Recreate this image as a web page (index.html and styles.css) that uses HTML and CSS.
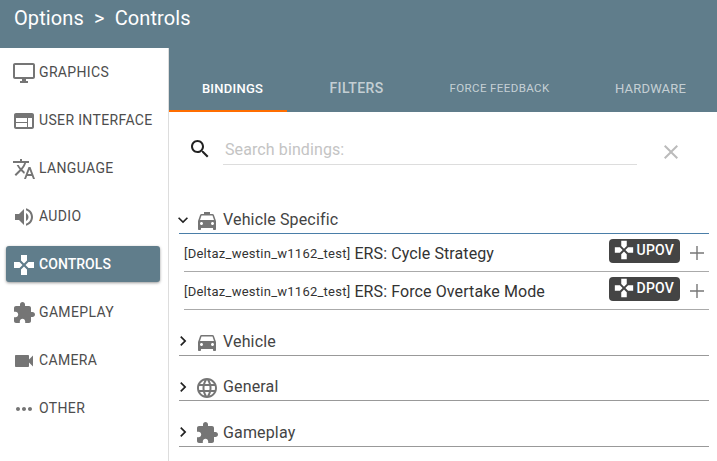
FILE: index.html
```html
<!DOCTYPE html>
<html>
<head>
	<title>Options - Controls</title>
	<meta charset="UTF-8">
	<link rel="stylesheet" href="styles.css">
</head>
<body>
	<svg class="icon-defs">
		<symbol id="i-desktop" viewBox="0 0 24 24"><path d="M21 2H3c-1.1 0-2 .9-2 2v12c0 1.1.9 2 2 2h7v2H8v2h8v-2h-2v-2h7c1.1 0 2-.9 2-2V4c0-1.1-.9-2-2-2zm0 14H3V4h18v12z"/></symbol>
		<symbol id="i-web" viewBox="0 0 24 24"><path d="M20 4H4c-1.1 0-1.99.9-1.99 2L2 18c0 1.1.9 2 2 2h16c1.1 0 2-.9 2-2V6c0-1.1-.9-2-2-2zm-5 14H4v-4h11v4zm0-5H4V9h11v4zm5 5h-4V9h4v9z"/></symbol>
		<symbol id="i-translate" viewBox="0 0 24 24"><path d="M12.87 15.07l-2.54-2.51.03-.03c1.74-1.94 2.98-4.17 3.71-6.53H17V4h-7V2H8v2H1v1.99h11.17C11.5 7.92 10.44 9.75 9 11.35 8.07 10.32 7.3 9.19 6.69 8h-2c.73 1.63 1.73 3.17 2.98 4.56l-5.09 5.02L4 19l5-5 3.11 3.11.76-2.04zM18.5 10h-2L12 22h2l1.12-3h4.75L21 22h2l-4.5-12zm-2.62 7l1.62-4.33L19.12 17h-3.24z"/></symbol>
		<symbol id="i-volume" viewBox="0 0 24 24"><path d="M3 9v6h4l5 5V4L7 9H3zm13.5 3c0-1.77-1.02-3.29-2.5-4.03v8.05c1.48-.73 2.5-2.25 2.5-4.02zM14 3.23v2.06c2.89.86 5 3.54 5 6.71s-2.11 5.85-5 6.71v2.06c4.01-.91 7-4.49 7-8.77s-2.99-7.86-7-8.77z"/></symbol>
		<symbol id="i-gamepad" viewBox="0 0 24 24"><path d="M15 7.5V2H9v5.5l3 3 3-3zM7.5 9H2v6h5.5l3-3-3-3zM9 16.5V22h6v-5.5l-3-3-3 3zM16.5 9l-3 3 3 3H22V9h-5.5z"/></symbol>
		<symbol id="i-extension" viewBox="0 0 24 24"><path d="M20.5 11H19V7c0-1.1-.9-2-2-2h-4V3.5C13 2.12 11.88 1 10.5 1S8 2.12 8 3.5V5H4c-1.1 0-1.99.9-1.99 2v3.8H3.5c1.49 0 2.7 1.21 2.7 2.7s-1.21 2.7-2.7 2.7H2V20c0 1.1.9 2 2 2h3.8v-1.5c0-1.49 1.21-2.7 2.7-2.7 1.49 0 2.7 1.21 2.7 2.7V22H17c1.1 0 2-.9 2-2v-4h1.5c1.38 0 2.5-1.12 2.5-2.5S21.88 11 20.5 11z"/></symbol>
		<symbol id="i-videocam" viewBox="0 0 24 24"><path d="M17 10.5V7c0-.55-.45-1-1-1H4c-.55 0-1 .45-1 1v10c0 .55.45 1 1 1h12c.55 0 1-.45 1-1v-3.5l4 4v-11l-4 4z"/></symbol>
		<symbol id="i-more" viewBox="0 0 24 24"><path d="M6 10c-1.1 0-2 .9-2 2s.9 2 2 2 2-.9 2-2-.9-2-2-2zm12 0c-1.1 0-2 .9-2 2s.9 2 2 2 2-.9 2-2-.9-2-2-2zm-6 0c-1.1 0-2 .9-2 2s.9 2 2 2 2-.9 2-2-.9-2-2-2z"/></symbol>
		<symbol id="i-search" viewBox="0 0 24 24"><path d="M15.5 14h-.79l-.28-.27C15.41 12.59 16 11.11 16 9.5 16 5.91 13.09 3 9.5 3S3 5.91 3 9.5 5.91 16 9.5 16c1.61 0 3.09-.59 4.23-1.57l.27.28v.79l5 4.99L20.49 19l-4.99-5zm-6 0C7.01 14 5 11.99 5 9.5S7.01 5 9.5 5 14 7.01 14 9.5 11.99 14 9.5 14z"/></symbol>
		<symbol id="i-close" viewBox="0 0 24 24"><path d="M19 6.41L17.59 5 12 10.59 6.41 5 5 6.41 10.59 12 5 17.59 6.41 19 12 13.41 17.59 19 19 17.59 13.41 12z"/></symbol>
		<symbol id="i-add" viewBox="0 0 24 24"><path d="M19 12.7h-6.3V19h-1.4v-6.3H5v-1.4h6.3V5h1.4v6.3H19z"/></symbol>
		<symbol id="i-down" viewBox="0 0 24 24"><path d="M16.59 8.59L12 13.17 7.41 8.59 6 10l6 6 6-6z"/></symbol>
		<symbol id="i-right" viewBox="0 0 24 24"><path d="M10 6L8.59 7.41 13.17 12l-4.58 4.59L10 18l6-6z"/></symbol>
		<symbol id="i-taxi" viewBox="0 0 24 24"><path d="M18.92 6.01C18.72 5.42 18.16 5 17.5 5H15V3H9v2H6.5c-.66 0-1.21.42-1.42 1.01L3 12v8c0 .55.45 1 1 1h1c.55 0 1-.45 1-1v-1h12v1c0 .55.45 1 1 1h1c.55 0 1-.45 1-1v-8l-2.08-5.99zM6.5 16c-.83 0-1.5-.67-1.5-1.5S5.67 13 6.5 13s1.5.67 1.5 1.5S7.33 16 6.5 16zm11 0c-.83 0-1.5-.67-1.5-1.5s.67-1.5 1.5-1.5 1.5.67 1.5 1.5-.67 1.5-1.5 1.5zM5 11l1.5-4.5h11L19 11H5z"/></symbol>
		<symbol id="i-car" viewBox="0 0 24 24"><path d="M18.92 6.01C18.72 5.42 18.16 5 17.5 5h-11c-.66 0-1.21.42-1.42 1.01L3 12v8c0 .55.45 1 1 1h1c.55 0 1-.45 1-1v-1h12v1c0 .55.45 1 1 1h1c.55 0 1-.45 1-1v-8l-2.08-5.99zM6.5 16c-.83 0-1.5-.67-1.5-1.5S5.67 13 6.5 13s1.5.67 1.5 1.5S7.33 16 6.5 16zm11 0c-.83 0-1.5-.67-1.5-1.5s.67-1.5 1.5-1.5 1.5.67 1.5 1.5-.67 1.5-1.5 1.5zM5 11l1.5-4.5h11L19 11H5z"/></symbol>
		<symbol id="i-globe" viewBox="0 0 24 24"><path d="M11.99 2C6.47 2 2 6.48 2 12s4.47 10 9.99 10C17.52 22 22 17.52 22 12S17.52 2 11.99 2zm6.93 6h-2.95c-.32-1.25-.78-2.45-1.38-3.56 1.84.63 3.37 1.91 4.33 3.56zM12 4.04c.83 1.2 1.48 2.53 1.91 3.96h-3.82c.43-1.43 1.08-2.76 1.91-3.96zM4.26 14C4.1 13.36 4 12.69 4 12s.1-1.36.26-2h3.38c-.08.66-.14 1.32-.14 2 0 .68.06 1.34.14 2H4.26zm.82 2h2.95c.32 1.25.78 2.45 1.38 3.56-1.84-.63-3.37-1.9-4.33-3.56zm2.95-8H5.08c.96-1.66 2.49-2.93 4.33-3.56C8.81 5.55 8.35 6.75 8.03 8zM12 19.96c-.83-1.2-1.48-2.53-1.91-3.96h3.82c-.43 1.43-1.08 2.76-1.91 3.96zM14.34 14H9.66c-.09-.66-.16-1.32-.16-2 0-.68.07-1.35.16-2h4.68c.09.65.16 1.32.16 2 0 .68-.07 1.34-.16 2zm.25 5.56c.6-1.11 1.06-2.31 1.38-3.56h2.95c-.96 1.65-2.49 2.93-4.33 3.56zM16.36 14c.08-.66.14-1.32.14-2 0-.68-.06-1.34-.14-2h3.38c.16.64.26 1.31.26 2s-.1 1.36-.26 2h-3.38z"/></symbol>
	</svg>

	<header class="title-bar">Options&nbsp; &gt;&nbsp; Controls</header>

	<div class="main">
		<nav class="sidebar">
			<a class="nav-item"><svg class="nav-icon"><use href="#i-desktop"/></svg>GRAPHICS</a>
			<a class="nav-item"><svg class="nav-icon"><use href="#i-web"/></svg>USER INTERFACE</a>
			<a class="nav-item"><svg class="nav-icon"><use href="#i-translate"/></svg>LANGUAGE</a>
			<a class="nav-item"><svg class="nav-icon"><use href="#i-volume"/></svg>AUDIO</a>
			<a class="nav-item active"><svg class="nav-icon"><use href="#i-gamepad"/></svg>CONTROLS</a>
			<a class="nav-item"><svg class="nav-icon"><use href="#i-extension"/></svg>GAMEPLAY</a>
			<a class="nav-item"><svg class="nav-icon"><use href="#i-videocam"/></svg>CAMERA</a>
			<a class="nav-item"><svg class="nav-icon"><use href="#i-more"/></svg>OTHER</a>
		</nav>

		<section class="content">
			<div class="tabs">
				<a class="tab selected">BINDINGS</a>
				<a class="tab filters">FILTERS</a>
				<a class="tab force">FORCE FEEDBACK</a>
				<a class="tab hardware">HARDWARE</a>
			</div>

			<div class="search">
				<svg class="search-icon"><use href="#i-search"/></svg>
				<div class="search-field">Search bindings:</div>
				<svg class="search-clear"><use href="#i-close"/></svg>
			</div>

			<div class="group open">
				<svg class="chevron"><use href="#i-down"/></svg>
				<svg class="group-icon"><use href="#i-taxi"/></svg>
				Vehicle Specific
			</div>
			<div class="binding">
				<span class="mod">[Deltaz_westin_w1162_test]</span>
				<span class="binding-name">ERS: Cycle Strategy</span>
				<span class="key"><svg class="key-icon"><use href="#i-gamepad"/></svg>UPOV</span>
				<svg class="add"><use href="#i-add"/></svg>
			</div>
			<div class="binding">
				<span class="mod">[Deltaz_westin_w1162_test]</span>
				<span class="binding-name">ERS: Force Overtake Mode</span>
				<span class="key"><svg class="key-icon"><use href="#i-gamepad"/></svg>DPOV</span>
				<svg class="add"><use href="#i-add"/></svg>
			</div>

			<div class="group first-closed">
				<svg class="chevron"><use href="#i-right"/></svg>
				<svg class="group-icon"><use href="#i-car"/></svg>
				Vehicle
			</div>
			<div class="group">
				<svg class="chevron"><use href="#i-right"/></svg>
				<svg class="group-icon"><use href="#i-globe"/></svg>
				General
			</div>
			<div class="group">
				<svg class="chevron"><use href="#i-right"/></svg>
				<svg class="group-icon"><use href="#i-extension"/></svg>
				Gameplay
			</div>
		</section>
	</div>
</body>
</html>
```

FILE: styles.css
```css
* {
	box-sizing: border-box;
}

html, body {
	height: 100%;
}

body {
	margin: 0;
	overflow: hidden;
	display: flex;
	flex-direction: column;
	background-color: #fff;
	font-family: Roboto, sans-serif;
	color: #333;
}

.icon-defs {
	display: none;
}

svg {
	fill: currentColor;
	flex-shrink: 0;
}

.title-bar {
	height: 48px;
	padding: 5px 0 0 14px;
	background-color: #607d8b;
	color: #fff;
	font-size: 20px;
	line-height: 26px;
	letter-spacing: 0.1px;
}

.main {
	flex: 1;
	display: flex;
	min-height: 0;
}

.sidebar {
	width: 169px;
	padding: 6px 8px 0 6px;
	border-right: 1px solid #ddd;
	display: flex;
	flex-direction: column;
	gap: 12px;
}

.nav-item {
	height: 36px;
	padding-left: 6px;
	display: flex;
	align-items: center;
	gap: 3px;
	font-size: 14px;
	letter-spacing: 0.35px;
	color: #4d4d4d;
	border-radius: 3px;
}

.nav-icon {
	width: 24px;
	height: 24px;
	margin-top: 1px;
	color: #757575;
}

.nav-item.active {
	background-color: #607d8b;
	color: #fff;
	font-weight: 500;
	letter-spacing: 0.05px;
	box-shadow: 0 1px 3px rgba(0, 0, 0, 0.4);
}

.nav-item.active .nav-icon {
	color: #fff;
}

.content {
	flex: 1;
	min-width: 0;
}

.tabs {
	height: 64px;
	background-color: #607d8b;
	display: flex;
	font-size: 13px;
	letter-spacing: 0.4px;
	color: rgba(255, 255, 255, 0.65);
}

.tab {
	flex-shrink: 0;
	height: 64px;
	padding-top: 16px;
	display: flex;
	align-items: center;
	justify-content: center;
	white-space: nowrap;
}

.tab.selected {
	width: 118px;
	padding-left: 9px;
	padding-top: 18px;
	color: #fff;
	font-weight: 500;
	letter-spacing: 0.25px;
	border-bottom: 2px solid #ff6d00;
}

.tab.filters {
	width: 139px;
	font-size: 14px;
	font-weight: 500;
}

.tab.force {
	width: 147px;
	font-size: 11.5px;
}

.tab.hardware {
	width: 155px;
	letter-spacing: 0.2px;
}

.search {
	height: 88px;
	display: flex;
	align-items: flex-start;
	padding: 21px 0 0 19px;
}

.search-icon {
	width: 24px;
	height: 24px;
	margin: 4px 11px 0 0;
	color: #222;
}

.search-field {
	width: 414px;
	height: 32px;
	padding-left: 2px;
	border-bottom: 1px solid #ddd;
	font-size: 16px;
	line-height: 34px;
	letter-spacing: 0.1px;
	color: #c4c4c4;
}

.search-clear {
	width: 24px;
	height: 24px;
	margin: 7px 0 0 22px;
	color: #bbb;
}

.group {
	height: 33.5px;
	margin: 12px 8px 0 10px;
	padding-top: 6px;
	display: flex;
	align-items: center;
	border-bottom: 1px solid #999;
	font-size: 16px;
	letter-spacing: 0.15px;
	color: #444;
}

.group.open {
	height: 34px;
	margin-top: 0;
	border-bottom-color: #4a7ea8;
}

.group.first-closed {
	margin-top: 12px;
}

.chevron {
	width: 20px;
	height: 20px;
	margin-left: -6px;
	color: #222;
}

.group-icon {
	width: 24px;
	height: 24px;
	margin: 2px 4px 0 2px;
	color: #757575;
}

.binding {
	height: 38px;
	margin: 0 8px 0 15px;
	padding-top: 2px;
	display: flex;
	align-items: center;
	border-bottom: 1px solid #aaa;
	color: #333;
}

.mod {
	font-size: 13px;
	letter-spacing: 0.25px;
	margin-right: 4px;
}

.binding-name {
	flex: 1;
	font-size: 16px;
	letter-spacing: 0.1px;
}

.key {
	height: 24px;
	padding: 0 6px 1px 4px;
	display: flex;
	align-items: center;
	background-color: #444;
	color: #fff;
	border-radius: 4px;
	font-size: 14px;
	font-weight: 500;
	letter-spacing: 0.2px;
	margin-bottom: 6px;
}

.key-icon {
	width: 22px;
	height: 22px;
	margin-right: 2px;
}

.add {
	width: 24px;
	height: 24px;
	margin: 0 0 2px 5px;
	color: #777;
}
```
